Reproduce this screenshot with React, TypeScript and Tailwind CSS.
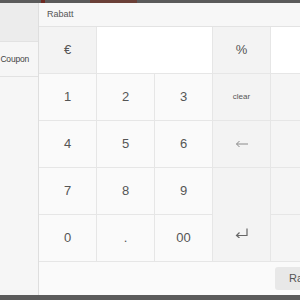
import React from "react";

const keyCell =
  "flex items-center justify-center bg-[#fafafa] text-[13px] text-[#555]";
const fnCell = "flex items-center justify-center bg-[#f3f3f3] text-[#555]";

export default function App() {
  const digits = ["1", "2", "3", "4", "5", "6", "7", "8", "9"];

  return (
    <div
      className="flex h-[300px] w-[300px] flex-col overflow-hidden bg-[#5b5b5b]"
      style={{ fontFamily: '"Liberation Sans", Arial, sans-serif' }}
    >
      {/* backdrop strip */}
      <div className="flex h-[3px] shrink-0">
        <div className="ml-[41px] w-[4px] bg-[#6e2a22]" />
        <div className="ml-[45px] w-[47px] bg-[#6b4038]" />
      </div>

      <div className="flex h-[292px] shrink-0">
        {/* sidebar */}
        <div className="flex w-[39px] shrink-0 flex-col border-r border-[#dedede] bg-[#f6f6f6]">
          <div className="h-[39px] border-b border-[#e2e2e2] bg-[#ececec]" />
          <div className="flex h-[35px] items-center justify-end whitespace-nowrap border-b border-[#e2e2e2] pr-[9px] text-[8.5px] tracking-[-0.2px] text-[#444]">
            Coupon
          </div>
        </div>

        {/* discount panel */}
        <div className="flex min-w-0 flex-1 flex-col bg-[#fbfbfb]">
          <div className="flex h-[24px] shrink-0 items-center border-b border-[#e3e3e3] bg-[#f7f7f7] pl-[8px] text-[9px] text-[#555]">
            Rabatt
          </div>

          <div className="grid shrink-0 grid-cols-[57px_57px_57px_57px_57px] grid-rows-[46px_46px_46px_46px_46px] gap-px bg-[#e6e6e6] pb-px">
            <div className={`${fnCell} text-[13px] font-medium`}>€</div>
            <div className="col-span-2 bg-white" />
            <div className={`${fnCell} text-[13px] font-medium`}>%</div>
            <div className="bg-white" />

            {digits.slice(0, 3).map((d) => (
              <div key={d} className={keyCell}>
                {d}
              </div>
            ))}
            <div className={`${fnCell} text-[8px]`}>clear</div>
            <div className="bg-[#f5f5f5]" />

            {digits.slice(3, 6).map((d) => (
              <div key={d} className={keyCell}>
                {d}
              </div>
            ))}
            <div className={fnCell}>
              <svg width="14" height="8" viewBox="0 0 14 8" fill="none" stroke="#8a8a8a" strokeWidth="1">
                <path d="M13 4H1.5M4.5 1L1.5 4l3 3" />
              </svg>
            </div>
            <div className="bg-[#f5f5f5]" />

            {digits.slice(6, 9).map((d) => (
              <div key={d} className={keyCell}>
                {d}
              </div>
            ))}
            <div className="row-span-2 flex flex-col justify-end bg-[#f3f3f3]">
              <div className="flex h-[56px] items-center justify-center">
                <svg width="14" height="10" viewBox="0 0 14 10" fill="none" stroke="#666" strokeWidth="1.2">
                  <path d="M12 0.5V7.5H1.5M4.5 4.5L1.5 7.5l3 2.5" />
                </svg>
              </div>
            </div>
            <div className="bg-[#f5f5f5]" />

            <div className={keyCell}>0</div>
            <div className={keyCell}>.</div>
            <div className={keyCell}>00</div>
            <div className="bg-[#f5f5f5]" />
          </div>

          <div className="flex flex-1 items-center bg-[#fafafa] pl-[236px]">
            <div className="flex h-[23px] shrink-0 items-center whitespace-nowrap rounded-[3px] bg-[#e8e8e8] pl-[14px] pr-[14px] text-[11px] text-[#555]">
              Rabatt anwenden
            </div>
          </div>
        </div>
      </div>
    </div>
  );
}
